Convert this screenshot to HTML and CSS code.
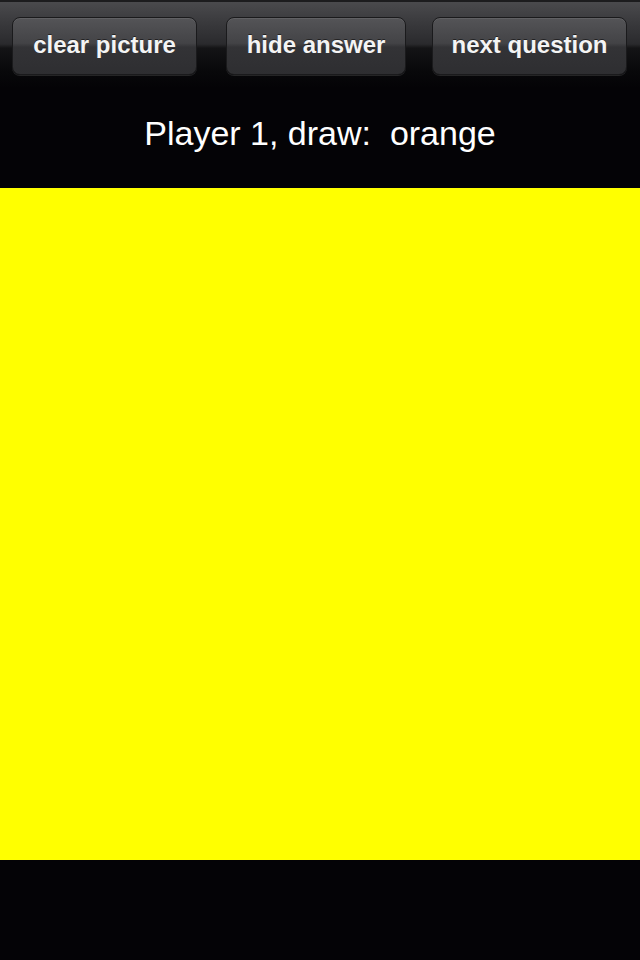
FILE: index.html
```html
<!DOCTYPE html>
<html>
<head>
<meta charset="utf-8">
<link rel="stylesheet" href="styles.css">
</head>
<body>
<div class="screen">
  <div class="toolbar">
    <div class="btn btn-clear">clear picture</div>
    <div class="btn btn-hide">hide answer</div>
    <div class="btn btn-next">next question</div>
  </div>
  <div class="prompt">Player 1, draw:&nbsp; orange</div>
  <div class="canvas"></div>
  <div class="footer"></div>
</div>
</body>
</html>
```

FILE: styles.css
```css
html, body {
  margin: 0;
  padding: 0;
  background: #040306;
}
.screen {
  width: 640px;
  height: 960px;
  display: flex;
  flex-direction: column;
  font-family: "Liberation Sans", Arial, sans-serif;
}
.toolbar {
  height: 88px;
  box-sizing: border-box;
  border-top: 2px solid #1c1c1e;
  background: linear-gradient(to bottom, #4a4a4d 0px, #3a3a3d 20px, #2a2a2d 42px, #141416 46px, #08080a 70px, #040306 86px);
  display: flex;
  align-items: flex-start;
  padding-top: 15px;
  padding-left: 12px;
}
.btn {
  height: 58px;
  box-sizing: border-box;
  border: 1px solid #1a1a1c;
  border-radius: 8px;
  background: linear-gradient(to bottom, #545457 0%, #434346 45%, #333336 52%, #2e2e31 100%);
  box-shadow: inset 0 1px 0 rgba(255,255,255,0.08), 0 1px 0 rgba(255,255,255,0.12);
  color: #f4f4f4;
  font-weight: bold;
  font-size: 24px;
  display: flex;
  align-items: center;
  justify-content: center;
  padding-bottom: 3px;
  text-shadow: 0 -1px 0 rgba(0,0,0,0.5);
}
.btn-clear { width: 185px; }
.btn-hide { width: 180px; margin-left: 29px; }
.btn-next { width: 195px; margin-left: 26px; }
.prompt {
  height: 100px;
  display: flex;
  align-items: center;
  justify-content: center;
  color: #ffffff;
  font-size: 34px;
  padding-bottom: 10px;
  box-sizing: border-box;
}
.canvas {
  height: 672px;
  background: #ffff00;
}
.footer {
  flex: 1;
  background: #040306;
}
```
